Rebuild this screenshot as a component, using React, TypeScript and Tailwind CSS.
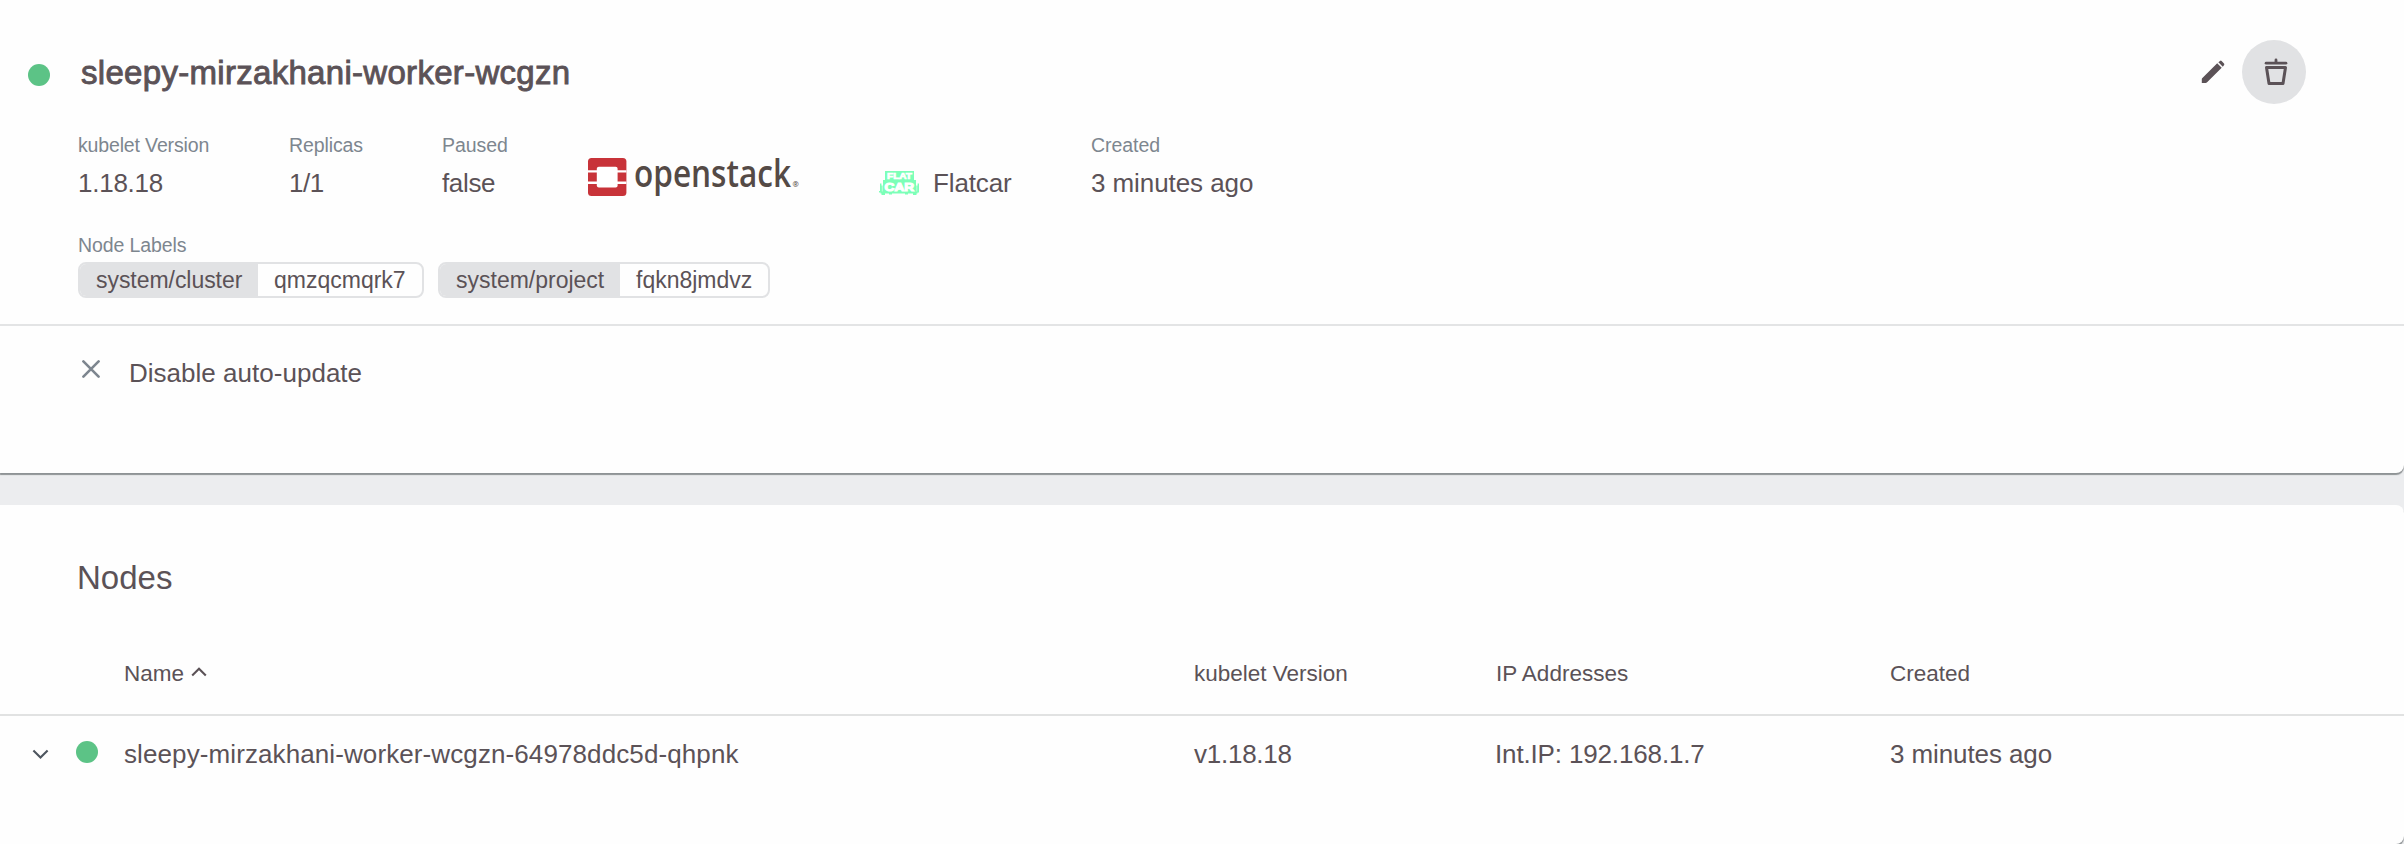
import type { ReactNode } from 'react';

function Property({ label, labelClass, children }: { label: string; labelClass: string; children: ReactNode }) {
  return (
    <div className="flex flex-col gap-2.5 whitespace-nowrap">
      <span className={`text-[19.5px] leading-6 text-[#7d868f] ${labelClass}`}>{label}</span>
      {children}
    </div>
  );
}

function OpenstackLogo() {
  return (
    <svg className="overflow-visible" width="214" height="56" viewBox="0 -8 214 56" aria-label="openstack">
      <rect x="0" y="3" width="38.4" height="38" rx="3.5" fill="#c83339" />
      <path d="M0 16.4H38.4M0 27.8H38.4" stroke="#fff" strokeWidth="2.4" />
      <rect x="8.8" y="11.7" width="20.8" height="20.8" rx="2" fill="#fff" />
      <text x="46" y="31.7" fontFamily="Open Sans, sans-serif" fontSize="37" fontWeight="600" fill="#544a46" textLength="157" lengthAdjust="spacingAndGlyphs">openstack</text>
      <text x="204.5" y="31.5" fontFamily="Open Sans, sans-serif" fontSize="7.5" fontWeight="600" fill="#544a46">®</text>
    </svg>
  );
}

function FlatcarLogo() {
  return (
    <svg width="40" height="26" viewBox="0 0 40 26" aria-hidden="true">
      <path d="M6 1H35V10H37V15.5H38.5V13.5H40V22.5H38.5V23.5H37.5V25H34V23.5H29V24.5H26V23.5H13V24.5H10V23.5H6V25H2.5V23.5H1.5V22.5H0V21H1V13.5H2.5V15.5H4V10H6Z" fill="#7cffb8" />
      <path d="M3.3 11V21.5M37.8 11V21.5" stroke="#fff" strokeWidth="0.5" />
      <g fill="#fff" stroke="#fff" fontFamily="Liberation Sans, sans-serif" fontWeight="700">
        <text x="8" y="8.5" fontSize="8.4" strokeWidth="0.7" textLength="25" lengthAdjust="spacingAndGlyphs">FLAT</text>
        <text x="5.6" y="20.6" fontSize="11.8" strokeWidth="1.1" textLength="29.5" lengthAdjust="spacingAndGlyphs">CAR</text>
      </g>
    </svg>
  );
}

function Chip({ name, value, nameClass, valueClass }: { name: string; value: string; nameClass: string; valueClass: string }) {
  return (
    <div className="flex h-9 overflow-hidden rounded-lg border-2 border-[#e1e2e4] text-[23px] leading-[34px]">
      <span className={`-mt-px h-9 bg-[#e1e2e4] pl-4 ${nameClass}`}>{name}</span>
      <span className={`-mt-px pl-4 ${valueClass}`}>{value}</span>
    </div>
  );
}

export default function App() {
  return (
    <div className="h-[844px] w-full overflow-hidden bg-[#ecedef] font-['Liberation_Sans',Arial,sans-serif] text-[#5b5257]">
      <section className="h-[473px] w-full rounded-br-lg bg-[#fefefe] pt-10 shadow-[0_2px_1px_0_rgba(80,86,88,0.6)]">
        <header className="flex h-16 items-center pr-[98px] pl-7">
          <span className="mt-1.5 size-[22px] rounded-full bg-[#5cc386]" />
          <h1 className="mt-0.5 ml-[31px] text-[33px] leading-10 tracking-[0.3px] whitespace-nowrap [-webkit-text-stroke:0.9px_#5b5257]">sleepy-mirzakhani-worker-wcgzn</h1>
          <button className="mr-[17px] ml-auto">
            <svg width="24" height="24" viewBox="0 0 24 24" fill="#5b5257" aria-label="Edit">
              <path d="M16.2 3.3L20.7 7.8L6.1 22.3Q5.4 23 4.6 23H0.8V19.3Q0.8 18.6 1.4 18.1Z" />
              <path d="M17.4 2.2L19 0.9Q19.8 0.3 20.6 1L23 3.4Q23.7 4.2 23.1 5L21.8 6.7Z" />
            </svg>
          </button>
          <button className="flex size-16 items-center justify-center rounded-full bg-[#e1e2e4] pl-1">
            <svg width="24" height="28" viewBox="0 0 24 28" fill="none" aria-label="Delete">
              <path d="M2.1 5.2H21.9" stroke="#5b5257" strokeWidth="2.8" strokeLinecap="round" />
              <path d="M12 2V4" stroke="#5b5257" strokeWidth="2.8" strokeLinecap="round" />
              <path d="M2.5 9.4H21.5L19 25.6H5Z" stroke="#5b5257" strokeWidth="3" strokeLinejoin="round" />
            </svg>
          </button>
        </header>
        <div className="mt-[29px] grid h-[66px] grid-cols-[211px_153px_145px_290px_213px_auto] grid-rows-[66px] pl-[78px] text-[26px] leading-8">
          <Property label="kubelet Version" labelClass="tracking-[-0.15px]"><span className="tracking-[-0.25px]">1.18.18</span></Property>
          <Property label="Replicas" labelClass="tracking-[-0.1px]"><span className="tracking-[-0.5px]">1/1</span></Property>
          <Property label="Paused" labelClass="tracking-[-0.05px]"><span className="tracking-[-0.36px]">false</span></Property>
          <div className="-mt-2 pt-[22px] pl-px"><OpenstackLogo /></div>
          <div className="flex items-end pl-0.5">
            <span className="mb-[3px]"><FlatcarLogo /></span>
            <span className="ml-3.5 tracking-[-0.13px]">Flatcar</span>
          </div>
          <Property label="Created" labelClass="pl-px tracking-[-0.05px]"><span className="pl-px tracking-[-0.08px]">3 minutes ago</span></Property>
        </div>
        <div className="mt-[34px] h-[93px] border-b-2 border-[#e3e4e5] pl-[78px]">
          <div className="text-[19.5px] leading-6 tracking-[-0.09px] text-[#7d868f]">Node Labels</div>
          <div className="mt-[5px] flex gap-3.5">
            <Chip name="system/cluster" nameClass="w-[178px] tracking-[-0.05px]" value="qmzqcmqrk7" valueClass="w-[164px]" />
            <Chip name="system/project" nameClass="w-[180px]" value="fqkn8jmdvz" valueClass="w-[148px]" />
          </div>
        </div>
        <div className="mt-[31px] flex h-8 items-start pl-[82px]">
          <svg className="mt-[3px]" width="18" height="18" viewBox="0 0 18 18" aria-hidden="true">
            <path d="M1.4 1.4L16.6 16.6M16.6 1.4L1.4 16.6" stroke="#7d868f" strokeWidth="2.6" strokeLinecap="round" />
          </svg>
          <span className="ml-[29px] text-[26px] leading-8 tracking-[0.02px]">Disable auto-update</span>
        </div>
      </section>
      <section className="mt-8 h-[339px] w-full rounded-tr-lg rounded-br-lg bg-[#fefefe] pt-[53px] shadow-[0_2px_1px_0_rgba(80,86,88,0.6)]">
        <h2 className="pl-[77px] text-[33px] leading-10">Nodes</h2>
        <div className="mt-[61px] grid h-[57px] grid-cols-[1070px_302px_393px_auto] border-b-2 border-[#e1e2e2] pl-[124px] text-[22.5px] leading-[30px]">
          <span className="flex gap-[7px]">
            Name
            <svg className="mt-2" width="16" height="10" viewBox="0 0 16 10" fill="none" aria-hidden="true">
              <path d="M1.2 8.6L8 1.8L14.8 8.6" stroke="#5b5257" strokeWidth="2.1" />
            </svg>
          </span>
          <span>kubelet Version</span>
          <span>IP Addresses</span>
          <span className="pl-px">Created</span>
        </div>
        <div className="mt-[22px] grid grid-cols-[124px_1070px_301px_394px_auto] text-[26px] leading-8">
          <span className="flex pl-8">
            <svg className="mt-[11px]" width="17" height="11" viewBox="0 0 17 11" fill="none" aria-hidden="true">
              <path d="M1.4 1.6L8.5 8.6L15.6 1.6" stroke="#4d555e" strokeWidth="2.1" />
            </svg>
            <span className="mt-[3px] ml-[27px] size-[22px] rounded-full bg-[#5cc386]" />
          </span>
          <span className="tracking-[0.1px]">sleepy-mirzakhani-worker-wcgzn-64978ddc5d-qhpnk</span>
          <span className="tracking-[-0.25px]">v1.18.18</span>
          <span className="tracking-[-0.15px]">Int.IP: 192.168.1.7</span>
          <span className="pl-px tracking-[-0.1px]">3 minutes ago</span>
        </div>
      </section>
    </div>
  );
}
